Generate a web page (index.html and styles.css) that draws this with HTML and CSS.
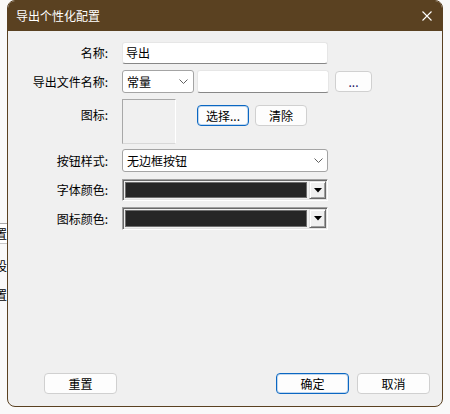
FILE: index.html
```html
<!DOCTYPE html>
<html lang="zh-CN">
<head>
<meta charset="utf-8">
<title>导出个性化配置</title>
<link rel="stylesheet" href="styles.css">
</head>
<body>
<div class="screen">
  <div class="behind">
    <div class="behind-item boxed"><span>设置</span></div>
    <div class="behind-item second"><span>建设</span></div>
    <div class="behind-item third"><span>配置</span></div>
  </div>
  <div class="window">
    <div class="titlebar">
      <span class="title">导出个性化配置</span>
      <svg class="close" width="10" height="10" viewBox="0 0 10 10"><path d="M0.5 0.5L9.5 9.5M9.5 0.5L0.5 9.5" stroke="#ffffff" stroke-width="1.1" fill="none"/></svg>
    </div>
    <div class="body">
      <div class="row r1">
        <span class="lbl">名称:</span>
        <div class="textbox w-full">导出</div>
      </div>
      <div class="row r2">
        <span class="lbl">导出文件名称:</span>
        <div class="select w-small"><span>常量</span><svg class="chev" width="9" height="5" viewBox="0 0 9 5"><path d="M0.5 0.5L4.5 4.5L8.5 0.5" stroke="#606060" fill="none"/></svg></div>
        <div class="textbox w-mid"></div>
        <div class="btn btn-dots">...</div>
      </div>
      <div class="row r3">
        <span class="lbl lbl-top">图标:</span>
        <div class="iconbox"></div>
        <div class="btn btn-sel focus">选择...</div>
        <div class="btn btn-clr">清除</div>
      </div>
      <div class="row r4">
        <span class="lbl">按钮样式:</span>
        <div class="select w-full"><span>无边框按钮</span><svg class="chev" width="9" height="5" viewBox="0 0 9 5"><path d="M0.5 0.5L4.5 4.5L8.5 0.5" stroke="#606060" fill="none"/></svg></div>
      </div>
      <div class="row r5">
        <span class="lbl">字体颜色:</span>
        <div class="combo"><div class="swatch"></div><div class="drop"><svg width="8" height="5" viewBox="0 0 8 5"><polygon points="0,0 8,0 4,4.5" fill="#000"/></svg></div></div>
      </div>
      <div class="row r6">
        <span class="lbl">图标颜色:</span>
        <div class="combo"><div class="swatch"></div><div class="drop"><svg width="8" height="5" viewBox="0 0 8 5"><polygon points="0,0 8,0 4,4.5" fill="#000"/></svg></div></div>
      </div>
    </div>
    <div class="footer">
      <div class="btn btn-foot">重置</div>
      <div class="btn btn-foot focus ok">确定</div>
      <div class="btn btn-foot">取消</div>
    </div>
  </div>
</div>
</body>
</html>
```
FILE: styles.css
```css
html, body {
  margin: 0;
  padding: 0;
}
body {
  background: #f9f9f9;
  font-family: "Noto Sans CJK SC", "Noto Sans", sans-serif;
  font-size: 12px;
  color: #000;
}
.screen {
  display: flex;
  width: 450px;
  height: 414px;
  overflow: hidden;
}
.behind {
  width: 7px;
  flex: none;
  display: flex;
  flex-direction: column;
  overflow: hidden;
  padding-top: 223px;
}
.behind-item {
  display: flex;
  justify-content: flex-end;
  white-space: nowrap;
  height: 20px;
  line-height: 20px;
  flex: none;
}
.behind-item.boxed {
  box-sizing: border-box;
  height: 21px;
  line-height: 19px;
  background: #ffffff;
  border-top: 1px solid #a8a8a8;
  border-bottom: 1px solid #c8c8c8;
}
.behind-item.second { margin-top: 12px; }
.behind-item.third { margin-top: 9px; }

.window {
  width: 436px;
  height: 407px;
  box-sizing: border-box;
  flex: none;
  border: 1px solid #5a4121;
  border-radius: 8px;
  background: #f0f0f0;
  overflow: hidden;
  display: flex;
  flex-direction: column;
}
.titlebar {
  height: 30px;
  flex: none;
  background: #5a4121;
  display: flex;
  align-items: center;
  padding-left: 8px;
  padding-right: 10px;
}
.title {
  color: #ffffff;
  font-size: 12px;
  line-height: 16px;
}
.close {
  margin-left: auto;
  display: block;
}
.body {
  padding-top: 11px;
}
.row {
  display: flex;
  align-items: center;
}
.lbl {
  width: 100px;
  flex: none;
  text-align: right;
  margin-right: 14px;
  line-height: 16px;
  white-space: nowrap;
}
.lbl-top {
  margin-top: 8px;
}
.r2, .r3, .r6 { margin-top: 6px; }
.r4 { margin-top: 5px; }
.r5 { margin-top: 7px; }
.r3 { align-items: flex-start; }

.textbox {
  box-sizing: border-box;
  height: 22px;
  background: #ffffff;
  border: 1px solid #e6e6e6;
  border-bottom-color: #878787;
  border-radius: 3px;
  padding-left: 3px;
  line-height: 20px;
}
.w-full { width: 206px; }
.w-mid { width: 132px; height: 23px; margin-left: 3px; }
.w-small { width: 72px; }

.select {
  box-sizing: border-box;
  height: 23px;
  background: #ffffff;
  border: 1px solid #a4a4a4;
  border-radius: 3px;
  padding-left: 4px;
  display: flex;
  align-items: center;
  line-height: 16px;
}
.select.w-small { padding-right: 5px; }
.select.w-full { padding-right: 4px; }
.chev {
  margin-left: auto;
  display: block;
}

.btn {
  box-sizing: border-box;
  height: 21px;
  background: #fdfdfd;
  border: 1px solid #d0d0d0;
  border-radius: 4px;
  display: flex;
  align-items: center;
  justify-content: center;
  line-height: 16px;
  flex: none;
}
.btn.focus {
  border-color: #0b67c2;
  box-shadow: inset 0 0 0 1px rgba(11, 103, 194, 0.25);
}
.btn-dots {
  width: 37px;
  margin-left: 6px;
  color: #201060;
}
.iconbox {
  box-sizing: border-box;
  width: 54px;
  height: 45px;
  border: 1px solid;
  border-color: #a8a8a8 #ffffff #d8d8d8 #a8a8a8;
  flex: none;
}
.btn-sel {
  width: 52px;
  margin-left: 21px;
  margin-top: 6px;
}
.btn-clr {
  width: 52px;
  margin-left: 6px;
  margin-top: 6px;
}

.combo {
  box-sizing: border-box;
  width: 206px;
  height: 23px;
  border: 1px solid;
  border-color: #a0a0a0 #ffffff #ffffff #a0a0a0;
  box-shadow: inset 1px 1px #696969, inset -1px -1px #e3e3e3;
  display: flex;
  padding: 1px;
}
.r5 .combo { height: 22px; }
.swatch {
  flex: 1;
  margin: 1px 2px 1px 1px;
  box-sizing: border-box;
  background: #262626;
  border: 1px solid #6e6e6e;
}
.drop {
  width: 17px;
  box-sizing: border-box;
  background: #f0f0f0;
  border: 1px solid;
  border-color: #e3e3e3 #696969 #696969 #e3e3e3;
  box-shadow: inset 1px 1px #ffffff, inset -1px -1px #a0a0a0;
  display: flex;
  align-items: center;
  justify-content: center;
}
.drop svg { display: block; }

.footer {
  margin-top: auto;
  display: flex;
  padding: 0 12px 12px 36px;
}
.btn-foot {
  width: 73px;
}
.btn-foot.ok {
  margin-left: auto;
  margin-right: 8px;
}
```
